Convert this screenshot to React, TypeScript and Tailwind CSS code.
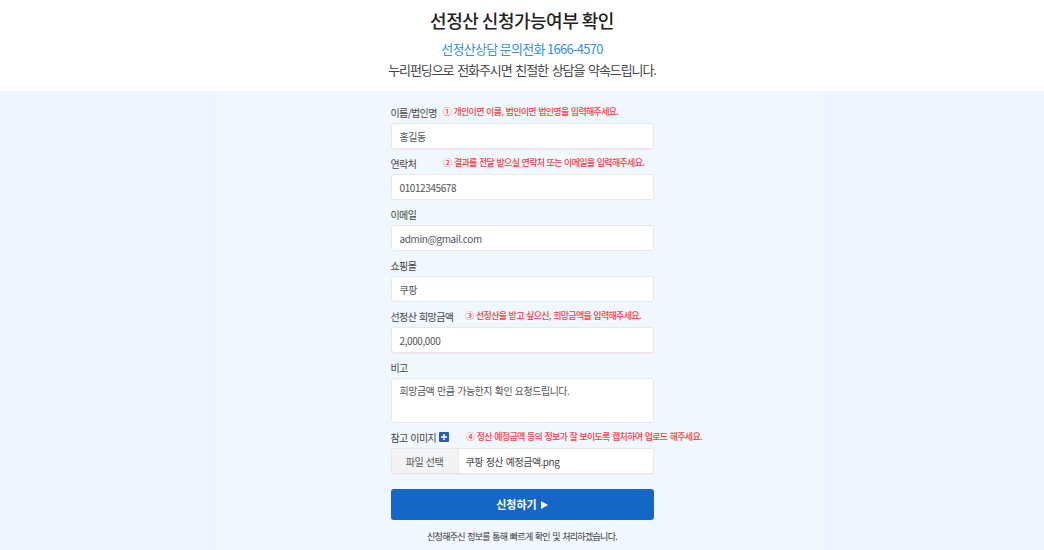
const fontStack = { fontFamily: '"Noto Sans CJK KR", "Noto Sans", sans-serif' };

function Hint({ children, className = "" }: { children: React.ReactNode; className?: string }) {
  return (
    <span className={`whitespace-nowrap text-[9px] tracking-[-0.7px] [word-spacing:1px] font-medium text-[#ff3b3b] ${className}`}>
      {children}
    </span>
  );
}

function Field({
  label,
  hint,
  hintClass,
  value,
  pink,
}: {
  label: React.ReactNode;
  hint?: string;
  hintClass?: string;
  value: string;
  pink?: boolean;
}) {
  return (
    <div className="mb-[7px]">
      <div className="flex items-center h-[14px] mb-[4px] whitespace-nowrap">
        <span className="text-[10px] tracking-[-0.6px] [word-spacing:1px] text-[#444] shrink-0">{label}</span>
        {hint && <Hint className={hintClass}>{hint}</Hint>}
      </div>
      <div
        className={`h-[26px] bg-white border border-[#e6e8eb] rounded-[3px] flex items-center px-[8px] text-[10px] tracking-[-0.4px] text-[#555] ${
          pink ? "shadow-[0_1px_0_#fde6e8]" : ""
        }`}
      >
        {value}
      </div>
    </div>
  );
}

export default function App() {
  return (
    <div className="w-[1044px] h-[550px] flex flex-col bg-white overflow-hidden" style={fontStack}>
      <div className="h-[91px] flex flex-col items-center pt-[6px]">
        <h1 className="text-[18px] leading-[28px] tracking-[-0.5px] font-medium text-[#222]">선정산 신청가능여부 확인</h1>
        <p className="mt-[6px] text-[13px] leading-[18px] tracking-[-0.7px] text-[#3b8de8]">선정산상담 문의전화 1666-4570</p>
        <p className="mt-[3px] text-[13px] leading-[18px] tracking-[-1.1px] [word-spacing:2px] text-[#444]">
          누리펀딩으로 전화주시면 친절한 상담을 약속드립니다.
        </p>
      </div>
      <div className="flex-1 bg-[#eff6fe] flex justify-center">
        <div className="w-[604px] bg-[#f1f7ff] flex justify-center pt-[14px]">
          <div className="w-[263px]">
            <Field label="이름/법인명" hint="① 개인이면 이름, 법인이면 법인명을 입력해주세요." hintClass="ml-[6px]" value="홍길동" pink />
            <Field label="연락처" hint="② 결과를 전달 받으실 연락처 또는 이메일을 입력해주세요." hintClass="ml-[27px]" value="01012345678" />
            <Field label="이메일" value="admin@gmail.com" />
            <Field label="쇼핑몰" value="쿠팡" />
            <Field label="선정산 희망금액" hint="③ 선정산을 받고 싶으신, 희망금액을 입력해주세요." hintClass="ml-[12px]" value="2,000,000" pink />

            <div className="mb-[7px]">
              <div className="flex items-center h-[14px] mb-[4px]">
                <span className="text-[10px] tracking-[-0.6px] text-[#444]">비고</span>
              </div>
              <div className="h-[45px] bg-white border border-[#e6e8eb] rounded-[3px] px-[8px] pt-[4px] text-[10px] tracking-[-0.5px] [word-spacing:1px] text-[#555]">
                희망금액 만큼 가능한지 확인 요청드립니다.
              </div>
            </div>

            <div>
              <div className="flex items-center h-[14px] mb-[4px] whitespace-nowrap">
                <span className="text-[10px] tracking-[-0.6px] [word-spacing:1px] text-[#444] shrink-0">참고 이미지</span>
                <span className="ml-[3px] shrink-0 w-[10px] h-[10px] bg-[#2a5db0] rounded-[1px] flex items-center justify-center">
                  <svg width="6" height="6" viewBox="0 0 6 6">
                    <path d="M3 0v6M0 3h6" stroke="white" strokeWidth="1.5" />
                  </svg>
                </span>
                <Hint className="ml-[17px]">④ 정산 예정금액 등의 정보가 잘 보이도록 캡처하여 업로드 해주세요.</Hint>
              </div>
              <div className="h-[26px] bg-white border border-[#e6e8eb] rounded-[3px] flex text-[10px] tracking-[-0.5px] [word-spacing:1px] text-[#555] overflow-hidden shadow-[0_1px_0_#fde6e8]">
                <div className="w-[67px] bg-[#f2f3f5] border-r border-[#e6e8eb] flex items-center justify-center text-[#555]">
                  파일 선택
                </div>
                <div className="flex items-center px-[7px] text-[#444]">쿠팡 정산 예정금액.png</div>
              </div>
            </div>

            <button className="mt-[15px] w-full h-[31px] bg-[#1467c6] rounded-[3px] text-white text-[11px] font-bold flex items-center justify-center gap-[4px]">
              신청하기
              <svg width="7" height="8" viewBox="0 0 7 8">
                <path d="M0 0L7 4L0 8Z" fill="white" />
              </svg>
            </button>

            <p className="mt-[10px] whitespace-nowrap text-center text-[9px] tracking-[-0.7px] [word-spacing:1px] text-[#333]">
              신청해주신 정보를 통해 빠르게 확인 및 처리하겠습니다.
            </p>
          </div>
        </div>
      </div>
    </div>
  );
}
